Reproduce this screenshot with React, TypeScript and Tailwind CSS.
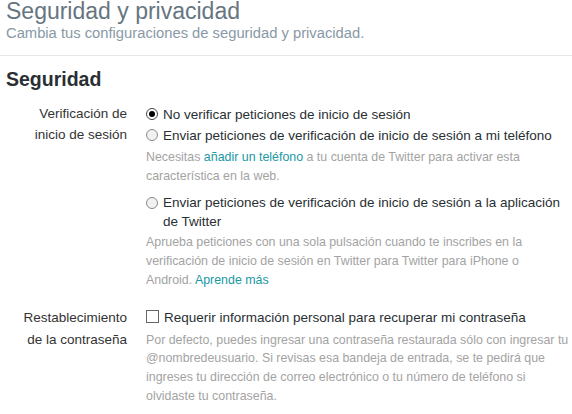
import React from 'react';

function Radio({ checked }: { checked?: boolean }) {
  return (
    <span
      className={`mt-[4px] flex h-[12px] w-[12px] shrink-0 items-center justify-center rounded-full border ${
        checked ? 'border-[#444] bg-white' : 'border-[#8a8a8a] bg-[#f1f1f1]'
      }`}
    >
      {checked && <span className="h-[6px] w-[6px] rounded-full bg-black" />}
    </span>
  );
}

function Checkbox() {
  return <span className="mt-[3px] h-[13px] w-[13px] shrink-0 border border-[#666] bg-white" />;
}

export default function App() {
  return (
    <div className="h-[414px] w-[572px] overflow-hidden bg-white font-['Liberation_Sans',Arial,sans-serif]">
      {/* Header */}
      <div className="h-[56px] border-b border-[#e6e6e6] px-[6px]">
        <h1 className="text-[23px] leading-[22px] text-[#66757f]">Seguridad y privacidad</h1>
        <p className="mt-[2px] text-[14.75px] leading-[18px] text-[#8899a6]">
          Cambia tus configuraciones de seguridad y privacidad.
        </p>
      </div>

      <div className="px-[6px] pt-[11px]">
        <h2 className="text-[19.5px] font-bold leading-[24px] text-[#292f33]">Seguridad</h2>
      </div>

      {/* Login verification */}
      <div className="mt-[13px] flex">
        <div className="w-[127px] shrink-0 text-right text-[13.5px] leading-[20.5px] text-[#333]">
          Verificación de
          <br />
          inicio de sesión
        </div>
        <div className="ml-[19px] w-[418px]">
          <label className="flex gap-[5px] text-[13.5px] leading-[21px] text-[#292f33]">
            <Radio checked />
            <span>No verificar peticiones de inicio de sesión</span>
          </label>
          <label className="flex gap-[5px] text-[13.5px] leading-[21px] text-[#292f33]">
            <Radio />
            <span>Enviar peticiones de verificación de inicio de sesión a mi teléfono</span>
          </label>
          <p className="mt-[2px] text-[12.4px] leading-[19.3px] text-[#a3a3a3]">
            Necesitas <a className="text-[#1b98a5]">añadir un teléfono</a> a tu cuenta de Twitter para activar esta
            característica en la web.
          </p>
          <label className="mt-[6px] flex gap-[5px] text-[13.5px] leading-[19px] text-[#292f33]">
            <Radio />
            <span>Enviar peticiones de verificación de inicio de sesión a la aplicación de Twitter</span>
          </label>
          <p className="mt-[2px] text-[12.4px] leading-[19px] text-[#a3a3a3]">
            Aprueba peticiones con una sola pulsación cuando te inscribes en la verificación de inicio de sesión en
            Twitter para Twitter para iPhone o Android. <a className="text-[#1b98a5]">Aprende más</a>
          </p>
        </div>
      </div>

      {/* Password reset */}
      <div className="mt-[17px] flex">
        <div className="w-[127px] shrink-0 text-right text-[13.5px] leading-[22px] text-[#333]">
          Restablecimiento
          <br />
          de la contraseña
        </div>
        <div className="ml-[19px] w-[426px]">
          <label className="flex gap-[5px] text-[13.5px] leading-[21px] text-[#292f33]">
            <Checkbox />
            <span>Requerir información personal para recuperar mi contraseña</span>
          </label>
          <p className="mt-[3px] text-[12.4px] leading-[18.8px] text-[#a3a3a3]">
            Por defecto, puedes ingresar una contraseña restaurada sólo con ingresar tu @nombredeusuario. Si revisas
            esa bandeja de entrada, se te pedirá que ingreses tu dirección de correo electrónico o tu número de
            teléfono si olvidaste tu contraseña.
          </p>
        </div>
      </div>
    </div>
  );
}
